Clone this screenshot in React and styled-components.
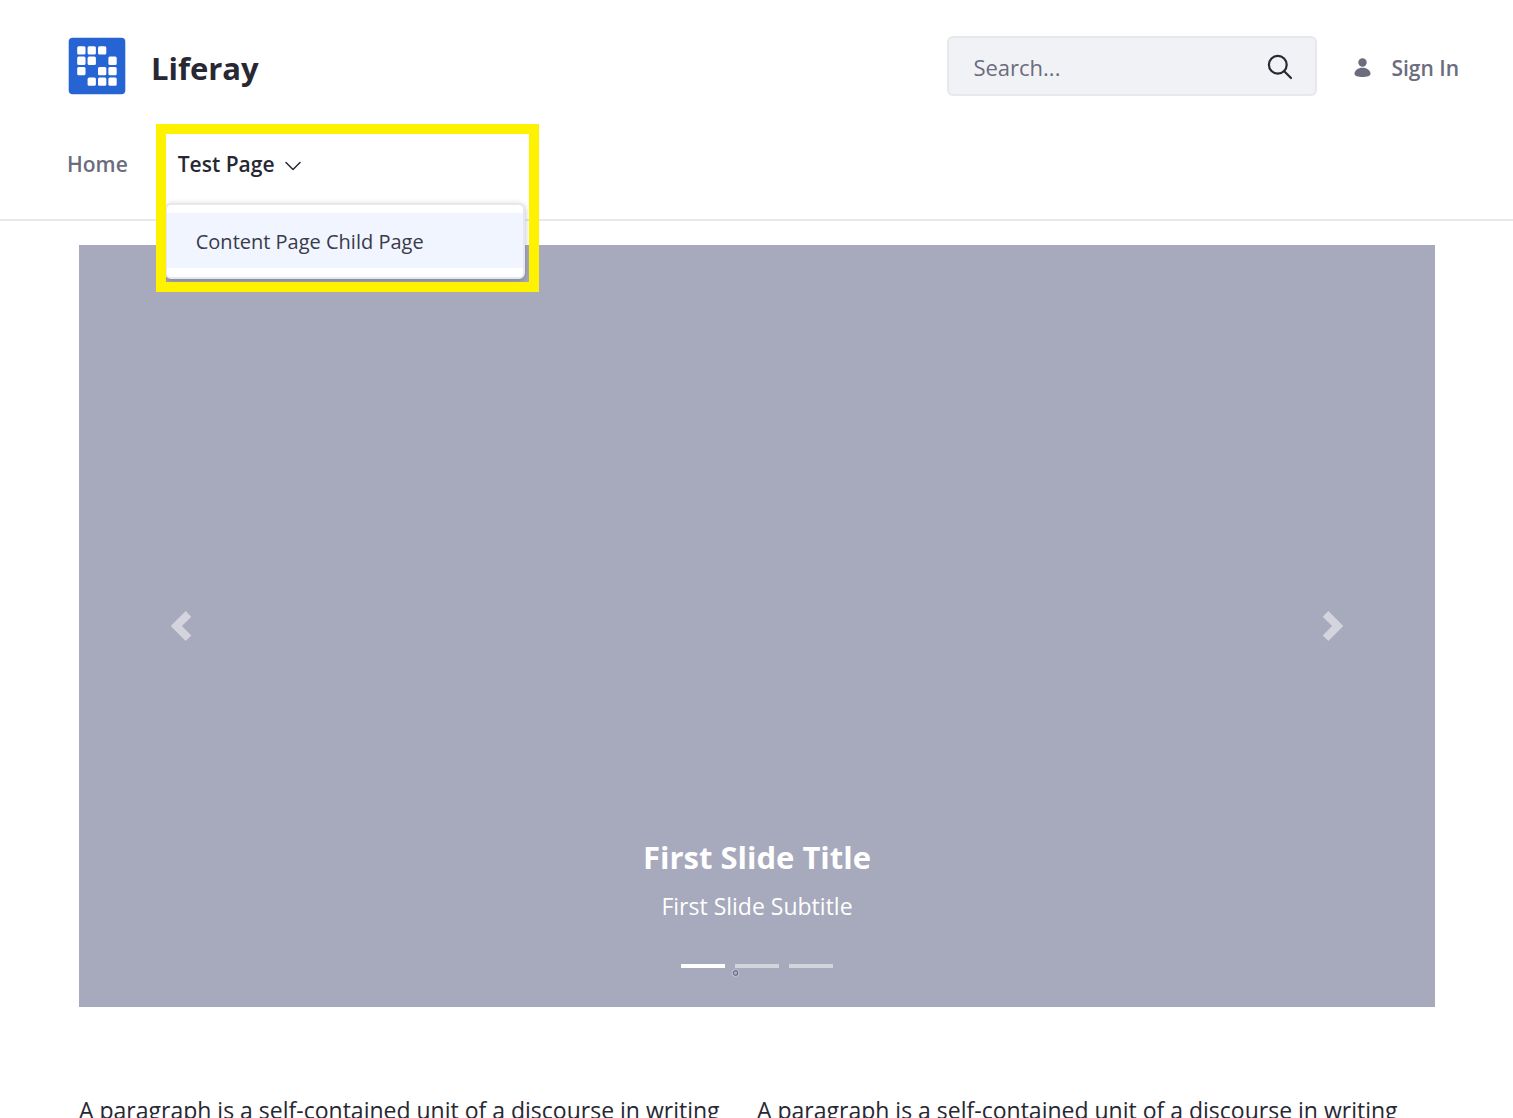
import React from "react";
import styled, { createGlobalStyle } from "styled-components";

const GlobalStyle = createGlobalStyle`
  *, *::before, *::after { box-sizing: border-box; }
  body {
    margin: 0;
    background: #fff;
    color: #272833;
    font-family: "Open Sans", "Noto Sans", sans-serif;
  }
  h1, h2, p, ul { margin: 0; padding: 0; }
  ul { list-style: none; }
  a { color: inherit; text-decoration: none; }
  button { border: 0; padding: 0; background: none; color: inherit; font: inherit; cursor: pointer; }
`;

const Page = styled.div`
  height: 100vh;
  overflow: hidden;
`;

const Header = styled.header`
  padding: 36px 54px 40px 67px;
  border-bottom: 2px solid #e7e7ed;
`;

const TopBar = styled.div`
  display: flex;
  align-items: center;
  justify-content: space-between;
  height: 60px;
`;

const Brand = styled.a`
  display: flex;
  align-items: center;
  gap: 25px;
  padding-left: 1px;
`;

const BrandName = styled.h1`
  font-size: 31px;
  font-weight: 700;
  line-height: 48px;
  padding-top: 4px;
`;

const UserTools = styled.div`
  display: flex;
  align-items: center;
  gap: 37px;
`;

const SearchForm = styled.form`
  display: flex;
  align-items: center;
  width: 370px;
  height: 60px;
  padding: 0 22px 0 24px;
  border: 2px solid #e7e7ed;
  border-radius: 6px;
  background: #f1f2f5;
`;

const SearchInput = styled.input`
  flex: 1;
  min-width: 0;
  padding: 2px 0 0;
  border: 0;
  outline: 0;
  background: transparent;
  color: #272833;
  font: 22px/36px "Open Sans", "Noto Sans", sans-serif;
  &::placeholder { color: #6b6c7e; opacity: 1; }
`;

const IconButton = styled.button`
  display: flex;
  padding-top: 2px;
  color: #272833;
`;

const SignIn = styled.a`
  display: flex;
  align-items: center;
  gap: 20px;
  color: #6b6c7e;
  font-size: 21px;
  font-weight: 600;
  line-height: 30px;
  padding-top: 3px;
`;

const NavList = styled.ul`
  display: flex;
  gap: 50px;
  padding-top: 53px;
`;

const NavItem = styled.li`
  position: relative;
`;

const NavLink = styled.a`
  display: flex;
  align-items: center;
  gap: 10px;
  color: ${(p) => (p.$active ? "#272833" : "#6b6c7e")};
  font-size: 21px;
  font-weight: 600;
  line-height: 30px;
`;

const Chevron = styled.svg`
  margin-top: 4px;
`;

const Highlight = styled.div`
  position: absolute;
  z-index: 2;
  top: -25px;
  left: -22px;
  width: 383px;
  height: 168px;
  border: 10px solid #fff200;
  overflow: hidden;
  pointer-events: none;
`;

const DropdownMenu = styled.ul`
  position: absolute;
  top: 69px;
  left: -1px;
  width: 360px;
  padding: 8px 0 9px;
  border: 2px solid #e7e7ed;
  border-radius: 6px;
  background: #fff;
  box-shadow: 0 2px 6px rgba(39, 40, 51, 0.3);
  pointer-events: auto;
`;

const DropdownLink = styled.a`
  display: block;
  padding: 14px 29px 11px;
  background: #f0f5ff;
  color: #393a4a;
  font-size: 20px;
  line-height: 30px;
`;

const Content = styled.main`
  padding: 24px 78px 0 79px;
`;

const Carousel = styled.section`
  display: grid;
  grid-template-columns: 15% 1fr 15%;
  height: 762px;
  background: #a7a9bc;
  color: #fff;
`;

const CarouselControl = styled.button`
  display: flex;
  align-items: center;
  justify-content: center;
  opacity: 0.5;
`;

const Slide = styled.div`
  display: flex;
  flex-direction: column;
  align-items: center;
  justify-content: flex-end;
  padding-bottom: 39px;
`;

const SlideTitle = styled.h2`
  font-size: 31px;
  font-weight: 700;
  line-height: 40px;
`;

const SlideSubtitle = styled.p`
  margin: 11px 0 40px;
  font-size: 23px;
  line-height: 36px;
`;

const Indicators = styled.div`
  position: relative;
  display: flex;
  gap: 10px;
`;

const Indicator = styled.button`
  width: 44px;
  height: 4px;
  background: #fff;
  opacity: ${(p) => (p.$active ? 1 : 0.5)};
`;

const Pointer = styled.svg`
  position: absolute;
  top: 5px;
  left: 50px;
  pointer-events: none;
`;

const Columns = styled.div`
  display: grid;
  grid-template-columns: 1fr 1fr;
  padding-top: 85px;
`;

const Paragraph = styled.p`
  font-size: 23px;
  line-height: 36px;
  white-space: nowrap;
`;

const LOGO_CELLS = [
  [0, 0], [1, 0], [2, 0],
  [0, 1], [1, 1], [3, 1],
  [0, 2], [2, 2], [3, 2],
  [1, 3], [2, 3], [3, 3],
];

const Logo = () => (
  <svg width="58" height="58" viewBox="0 0 58 58" aria-hidden="true">
    <rect x="0.7" y="0.7" width="56.6" height="56.6" rx="4" fill="#2764d3" />
    {LOGO_CELLS.map(([c, r]) => (
      <rect key={`${c}-${r}`} x={9.2 + c * 10.4} y={9.2 + r * 10.4} width="8.3" height="8.3" rx="1.5" fill="#fff" />
    ))}
  </svg>
);

const paragraph = "A paragraph is a self-contained unit of a discourse in writing";

export default function App() {
  return (
    <Page>
      <GlobalStyle />
      <Header>
        <TopBar>
          <Brand href="#">
            <Logo />
            <BrandName>Liferay</BrandName>
          </Brand>
          <UserTools>
            <SearchForm role="search">
              <SearchInput type="search" placeholder="Search..." aria-label="Search" />
              <IconButton type="button" aria-label="Submit search">
                <svg width="26" height="26" viewBox="0 0 26 26" fill="none" stroke="currentColor" strokeWidth="2.2" strokeLinecap="round">
                  <circle cx="10.8" cy="10.8" r="8.9" />
                  <path d="M17.2 17.2 24 24" />
                </svg>
              </IconButton>
            </SearchForm>
            <SignIn href="#">
              <svg width="17" height="20" viewBox="0 0 17 20" fill="currentColor" aria-hidden="true">
                <circle cx="8.5" cy="4.5" r="4.2" />
                <path d="M8.5 9.7C4 9.7.5 12.3.5 15.8.5 18.2 4 19 8.5 19s8-.8 8-3.2C16.5 12.3 13 9.7 8.5 9.7z" />
              </svg>
              Sign In
            </SignIn>
          </UserTools>
        </TopBar>
        <nav aria-label="Main">
          <NavList>
            <NavItem>
              <NavLink href="#">Home</NavLink>
            </NavItem>
            <NavItem>
              <NavLink href="#" $active>
                Test Page
                <Chevron width="16" height="10" viewBox="0 0 16 10" fill="none" stroke="currentColor" strokeWidth="1.5" strokeLinecap="round" strokeLinejoin="round" aria-hidden="true">
                  <path d="M1 1.5 8 8.5l7-7" />
                </Chevron>
              </NavLink>
              <Highlight>
                <DropdownMenu>
                  <li>
                    <DropdownLink href="#">Content Page Child Page</DropdownLink>
                  </li>
                </DropdownMenu>
              </Highlight>
            </NavItem>
          </NavList>
        </nav>
      </Header>
      <Content>
        <Carousel aria-label="Slides">
          <CarouselControl aria-label="Previous slide">
            <svg width="30" height="30" viewBox="0 0 8 8" fill="#fff">
              <path d="M5.25 0l-4 4 4 4 1.5-1.5-2.5-2.5 2.5-2.5-1.5-1.5z" />
            </svg>
          </CarouselControl>
          <Slide>
            <SlideTitle>First Slide Title</SlideTitle>
            <SlideSubtitle>First Slide Subtitle</SlideSubtitle>
            <Indicators>
              <Indicator $active aria-label="Slide 1" />
              <Indicator aria-label="Slide 2" />
              <Indicator aria-label="Slide 3" />
              <Pointer width="9" height="8" viewBox="0 0 9 8" aria-hidden="true">
                <circle cx="4.5" cy="4" r="3.8" fill="#c6c7d4" />
                <circle cx="4.5" cy="4" r="2.3" fill="#a7a9bc" stroke="#70728f" strokeWidth="1.2" />
              </Pointer>
            </Indicators>
          </Slide>
          <CarouselControl aria-label="Next slide">
            <svg width="30" height="30" viewBox="0 0 8 8" fill="#fff">
              <path d="M2.75 0l-1.5 1.5 2.5 2.5-2.5 2.5 1.5 1.5 4-4-4-4z" />
            </svg>
          </CarouselControl>
        </Carousel>
        <Columns>
          <Paragraph>{paragraph}</Paragraph>
          <Paragraph>{paragraph}</Paragraph>
        </Columns>
      </Content>
    </Page>
  );
}
